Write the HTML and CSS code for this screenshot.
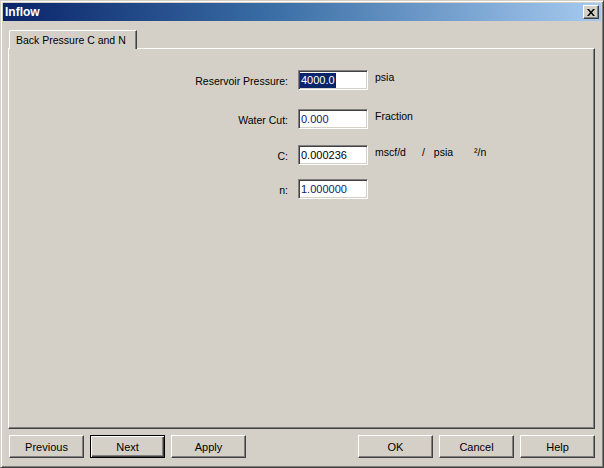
FILE: index.html
```html
<!DOCTYPE html>
<html lang="en">
<head>
    <meta charset="UTF-8">
    <title>Inflow</title>
    <link rel="stylesheet" href="styles.css">
</head>
<body>
    <div class="window">
        <div class="title-bar">
            <span class="title">Inflow</span>
            <button class="close-btn" aria-label="Close">
                <svg width="8" height="7" viewBox="0 0 8 7">
                    <path d="M0 0h2l2 2.5L6 0h2L5 3.5 8 7H6L4 4.5 2 7H0l3-3.5z" fill="#000"/>
                </svg>
            </button>
        </div>

        <div class="content">
            <div class="tabs">
                <div class="tab active">Back Pressure C and N</div>
            </div>

            <div class="panel">
                <div class="form-row row-pressure">
                    <span class="field-label">Reservoir Pressure:</span>
                    <div class="field"><span class="highlight">4000.0</span></div>
                    <span class="unit">psia</span>
                </div>
                <div class="form-row row-water">
                    <span class="field-label">Water Cut:</span>
                    <div class="field navy">0.000</div>
                    <span class="unit">Fraction</span>
                </div>
                <div class="form-row row-c">
                    <span class="field-label">C:</span>
                    <div class="field">0.000236</div>
                    <span class="unit unit-c">
                        <span>mscf/d</span>
                        <span class="slash">/</span>
                        <span>psia</span>
                        <span class="power">²/n</span>
                    </span>
                </div>
                <div class="form-row row-n">
                    <span class="field-label">n:</span>
                    <div class="field navy">1.000000</div>
                </div>
            </div>

            <div class="button-row">
                <div class="button-group">
                    <button class="btn">Previous</button>
                    <button class="btn default">Next</button>
                    <button class="btn">Apply</button>
                </div>
                <div class="button-group">
                    <button class="btn">OK</button>
                    <button class="btn">Cancel</button>
                    <button class="btn">Help</button>
                </div>
            </div>
        </div>
    </div>
</body>
</html>
```

FILE: styles.css
```css
* {
    margin: 0;
    padding: 0;
    box-sizing: border-box;
}

body {
    font-family: 'Liberation Sans', Arial, sans-serif;
    font-size: 10.5px;
    color: #000;
    background: #d4d0c8;
}

.window {
    width: 604px;
    height: 468px;
    display: flex;
    flex-direction: column;
    background: #d4d0c8;
    border: 1px solid;
    border-color: #d4d0c8 #404040 #404040 #d4d0c8;
    box-shadow: inset 1px 1px #fff, inset -1px -1px #808080;
    padding: 2px;
}

.title-bar {
    height: 18px;
    display: flex;
    align-items: center;
    justify-content: space-between;
    padding: 0 2px;
    background: linear-gradient(90deg, #0a246a 0%, #3a6ea5 45%, #a6caf0 100%);
}

.title {
    color: #fff;
    font-weight: bold;
    font-size: 12px;
}

.close-btn {
    width: 16px;
    height: 14px;
    display: flex;
    align-items: center;
    justify-content: center;
    background: #d4d0c8;
    border: 1px solid;
    border-color: #fff #404040 #404040 #fff;
    box-shadow: inset -1px -1px #808080;
}

.content {
    flex: 1;
    display: flex;
    flex-direction: column;
    padding: 9px 6px 7px 5px;
}

.tabs {
    display: flex;
    height: 18px;
    padding-left: 1px;
}

.tab {
    position: relative;
    z-index: 1;
    height: 19px;
    padding: 3px 10px 0 6px;
    font-size: 10.5px;
    background: #d4d0c8;
    border-top: 1px solid #fff;
    border-left: 1px solid #fff;
    border-right: 1px solid #404040;
    border-top-left-radius: 2px;
    box-shadow: inset -1px 0 #808080;
}

.panel {
    flex: 1;
    background: #d4d0c8;
    border: 1px solid;
    border-color: #fff #404040 #404040 #fff;
    box-shadow: inset -1px -1px #808080;
    display: flex;
    flex-direction: column;
}

.form-row {
    display: grid;
    grid-template-columns: 279px 80px auto;
    height: 20px;
}

.row-pressure {
    margin-top: 21px;
}

.row-water {
    margin-top: 19px;
}

.row-c {
    margin-top: 16px;
}

.row-n {
    margin-top: 14px;
}

.field-label {
    text-align: right;
    align-self: center;
    padding-top: 2px;
}

.field {
    margin-left: 10px;
    width: 70px;
    height: 20px;
    font-size: 11px;
    line-height: 18px;
    padding: 0 2px;
    color: #000;
    background: #fff;
    border: 1px solid;
    border-color: #808080 #fff #fff #808080;
    box-shadow: inset 1px 1px #404040, inset -1px -1px #d4d0c8;
}

.field.navy {
    color: #0a1a6a;
}

.highlight {
    display: inline-block;
    line-height: 15px;
    padding: 0 1px;
    margin-left: -1px;
    background: #0a246a;
    color: #fff;
}

.unit {
    padding-left: 7px;
    padding-top: 1px;
}

.unit-c {
    display: flex;
}

.slash {
    margin-left: 16px;
    margin-right: 9px;
}

.power {
    margin-left: 21px;
}

.button-row {
    display: flex;
    justify-content: space-between;
    margin-top: 6px;
    padding-left: 1px;
}

.button-group {
    display: flex;
    gap: 6px;
}

.btn {
    width: 75px;
    height: 23px;
    font-family: inherit;
    font-size: 11px;
    color: #000;
    background: #d4d0c8;
    border: 1px solid;
    border-color: #fff #404040 #404040 #fff;
    box-shadow: inset -1px -1px #808080;
}

.btn.default {
    border: 1px solid #000;
    box-shadow: inset 1px 1px #fff, inset -1px -1px #404040, inset -2px -2px #808080;
}
```
